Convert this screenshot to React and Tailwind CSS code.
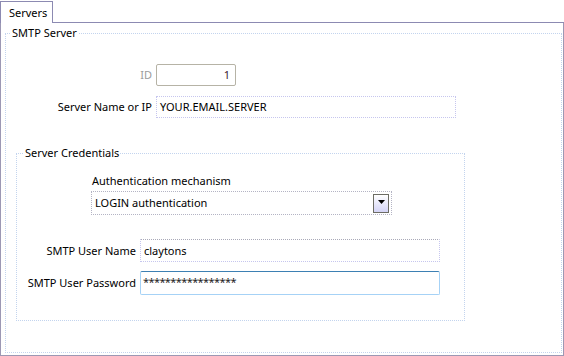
import React from 'react';

// Windows-forms style "Servers" settings page
const font = "font-['Segoe_UI','Noto_Sans',sans-serif]";

function Row({ label, labelW, children, className = '', labelClass = 'text-black' }) {
  return (
    <div className={`flex items-center ${className}`}>
      <div style={{ width: labelW }} className={`text-right pr-[4px] ${labelClass}`}>
        {label}
      </div>
      {children}
    </div>
  );
}

export default function App() {
  return (
    <div className={`w-[564px] h-[356px] bg-white text-[11px] leading-[16px] text-black ${font}`}>
      {/* Tab strip */}
      <div className="flex h-[23px] pt-[1px]">
        <div className="w-[53px] border border-b-0 border-[#8c8ab2] pl-[8px] pt-[3px] bg-white">
          Servers
        </div>
        <div className="flex-1 border-b border-[#8c8ab2]"></div>
      </div>

      {/* Panel */}
      <div className="h-[333px] border-x border-b border-[#9c98b4] pl-[4px] pr-[1px] pt-[2px] pb-[2px]">
        <fieldset className="h-full border border-dotted border-[#c3d4ee]">
          <legend className="ml-[5px] px-[1px]">SMTP Server</legend>

          <Row label="ID" labelW={150} className="mt-[23px]" labelClass="text-[#9c9c9c]">
            <div className="w-[80px] h-[22px] border border-[#b6b3a6] rounded-[2px] text-right pr-[5px] leading-[20px] text-[#3a2030]">
              1
            </div>
          </Row>

          <Row label="Server Name or IP" labelW={150} className="mt-[10px]">
            <div className="w-[300px] h-[22px] border border-dotted border-[#c6c6ee] pl-[3px] leading-[20px]">
              YOUR.EMAIL.SERVER
            </div>
          </Row>

          <fieldset className="ml-[10px] mt-[27px] w-[449px] h-[176px] border border-dotted border-[#c3d4ee]">
            <legend className="ml-[7px] px-[1px]">Server Credentials</legend>

            <div className="ml-[74px] mt-[12px]">
              <div className="pl-[1px]">Authentication mechanism</div>
              <div className="mt-[2px] w-[301px] h-[24px] border border-dotted border-[#b4b4c4] flex items-center justify-between pl-[3px] pr-[2px]">
                <span>LOGIN authentication</span>
                <div className="w-[16px] h-[19px] border border-[#6c6c64] bg-gradient-to-b from-white to-[#d4d4f6] flex justify-center pt-[5px]">
                  <svg width="7" height="4" viewBox="0 0 7 4">
                    <path d="M0 0h7L3.5 4z" fill="#000" />
                  </svg>
                </div>
              </div>
            </div>

            <Row label="SMTP User Name" labelW={123} className="mt-[24px]">
              <div className="w-[300px] h-[23px] border border-dotted border-[#c6c6ee] border-t-[#a9a9b8] pl-[3px] leading-[21px]">
                claytons
              </div>
            </Row>

            <Row label="SMTP User Password" labelW={123} className="mt-[9px]">
              <div className="w-[300px] h-[24px] border border-[#a6d2f6] border-t-[#3d80b3] rounded-[2px] pl-[2px] leading-[20px] tracking-[-0.6px] text-[#222]">
                *****************
              </div>
            </Row>
          </fieldset>
        </fieldset>
      </div>
    </div>
  );
}
